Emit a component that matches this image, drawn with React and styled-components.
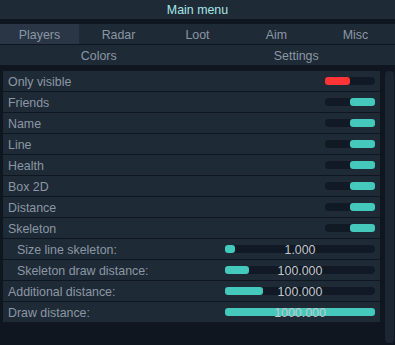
import React from "react";
import styled, { createGlobalStyle } from "styled-components";

const Global = createGlobalStyle`
  html, body { margin: 0; padding: 0; background: #0f1620; }
  body { font-family: "Liberation Sans", Arial, sans-serif; }
`;

const Window = styled.div`
  width: 395px;
  height: 345px;
  background: #0f1620;
  display: flex;
  flex-direction: column;
  overflow: hidden;
`;

const TitleBar = styled.div`
  height: 19px;
  padding-top: 1px;
  box-sizing: border-box;
  background: #1f2a37;
  color: #a6e6e4;
  font-size: 12.4px;
  display: flex;
  align-items: center;
  justify-content: center;
  margin-bottom: 5px;
`;

const TabRow = styled.div`
  display: grid;
  grid-template-columns: repeat(${(p) => p.$cols}, 1fr);
  height: 20px;
  background: #1f2a37;
  margin-bottom: ${(p) => p.$gap}px;
`;

const Tab = styled.div`
  display: flex;
  align-items: center;
  justify-content: center;
  padding-top: 1px;
  font-size: 12.4px;
  color: #8b97a3;
  background: ${(p) => (p.$active ? "#2a3646" : "transparent")};
`;

const Body = styled.div`
  display: flex;
  gap: 5px;
  padding-left: 3px;
  flex: 1;
`;

const Panel = styled.div`
  width: 377px;
  display: flex;
  flex-direction: column;
  gap: 1px;
  align-self: flex-start;
`;

const Row = styled.div`
  height: 20px;
  background: #1f2a37;
  display: flex;
  align-items: center;
  padding-left: ${(p) => (p.$indent ? 14 : 5)}px;
  padding-right: 5px;
`;

const Label = styled.span`
  flex: 1;
  font-size: 12.4px;
  color: #8b97a3;
  padding-top: 1px;
`;

const Toggle = styled.div`
  width: 50px;
  height: 8px;
  border-radius: 4px;
  background: #111a24;
  display: flex;
  justify-content: ${(p) => (p.$on ? "flex-end" : "flex-start")};
`;

const Knob = styled.div`
  width: 25px;
  height: 8px;
  border-radius: 3px;
  background: ${(p) => (p.$on ? "#45c9bc" : "#ff3535")};
`;

const Slider = styled.div`
  position: relative;
  width: 150px;
  height: 8px;
  border-radius: 4px;
  background: #111a24;
`;

const Fill = styled.div`
  height: 8px;
  border-radius: 3px;
  background: #45c9bc;
`;

const SliderValue = styled.span`
  position: absolute;
  left: 0;
  right: 0;
  top: 50%;
  transform: translateY(-45%);
  text-align: center;
  font-size: 12.4px;
  line-height: 12px;
  color: #c3c8ce;
`;

const Scrollbar = styled.div`
  width: 9px;
  height: 272px;
  border-radius: 4px;
  background: #1c2532;
`;

const toggles = [
  ["Only visible", false],
  ["Friends", true],
  ["Name", true],
  ["Line", true],
  ["Health", true],
  ["Box 2D", true],
  ["Distance", true],
  ["Skeleton", true],
];

const sliders = [
  ["Size line skeleton:", true, 10, "1.000"],
  ["Skeleton draw distance:", true, 24, "100.000"],
  ["Additional distance:", false, 38, "100.000"],
  ["Draw distance:", false, 150, "1000.000"],
];

export default function App() {
  return (
    <Window>
      <Global />
      <TitleBar>Main menu</TitleBar>
      <TabRow $cols={5} $gap={1}>
        <Tab $active>Players</Tab>
        <Tab>Radar</Tab>
        <Tab>Loot</Tab>
        <Tab>Aim</Tab>
        <Tab>Misc</Tab>
      </TabRow>
      <TabRow $cols={2} $gap={6}>
        <Tab>Colors</Tab>
        <Tab>Settings</Tab>
      </TabRow>
      <Body>
        <Panel>
          {toggles.map(([name, on]) => (
            <Row key={name}>
              <Label>{name}</Label>
              <Toggle $on={on}>
                <Knob $on={on} />
              </Toggle>
            </Row>
          ))}
          {sliders.map(([name, indent, w, val]) => (
            <Row key={name} $indent={indent}>
              <Label>{name}</Label>
              <Slider>
                <Fill style={{ width: w }} />
                <SliderValue>{val}</SliderValue>
              </Slider>
            </Row>
          ))}
        </Panel>
        <Scrollbar />
      </Body>
    </Window>
  );
}
